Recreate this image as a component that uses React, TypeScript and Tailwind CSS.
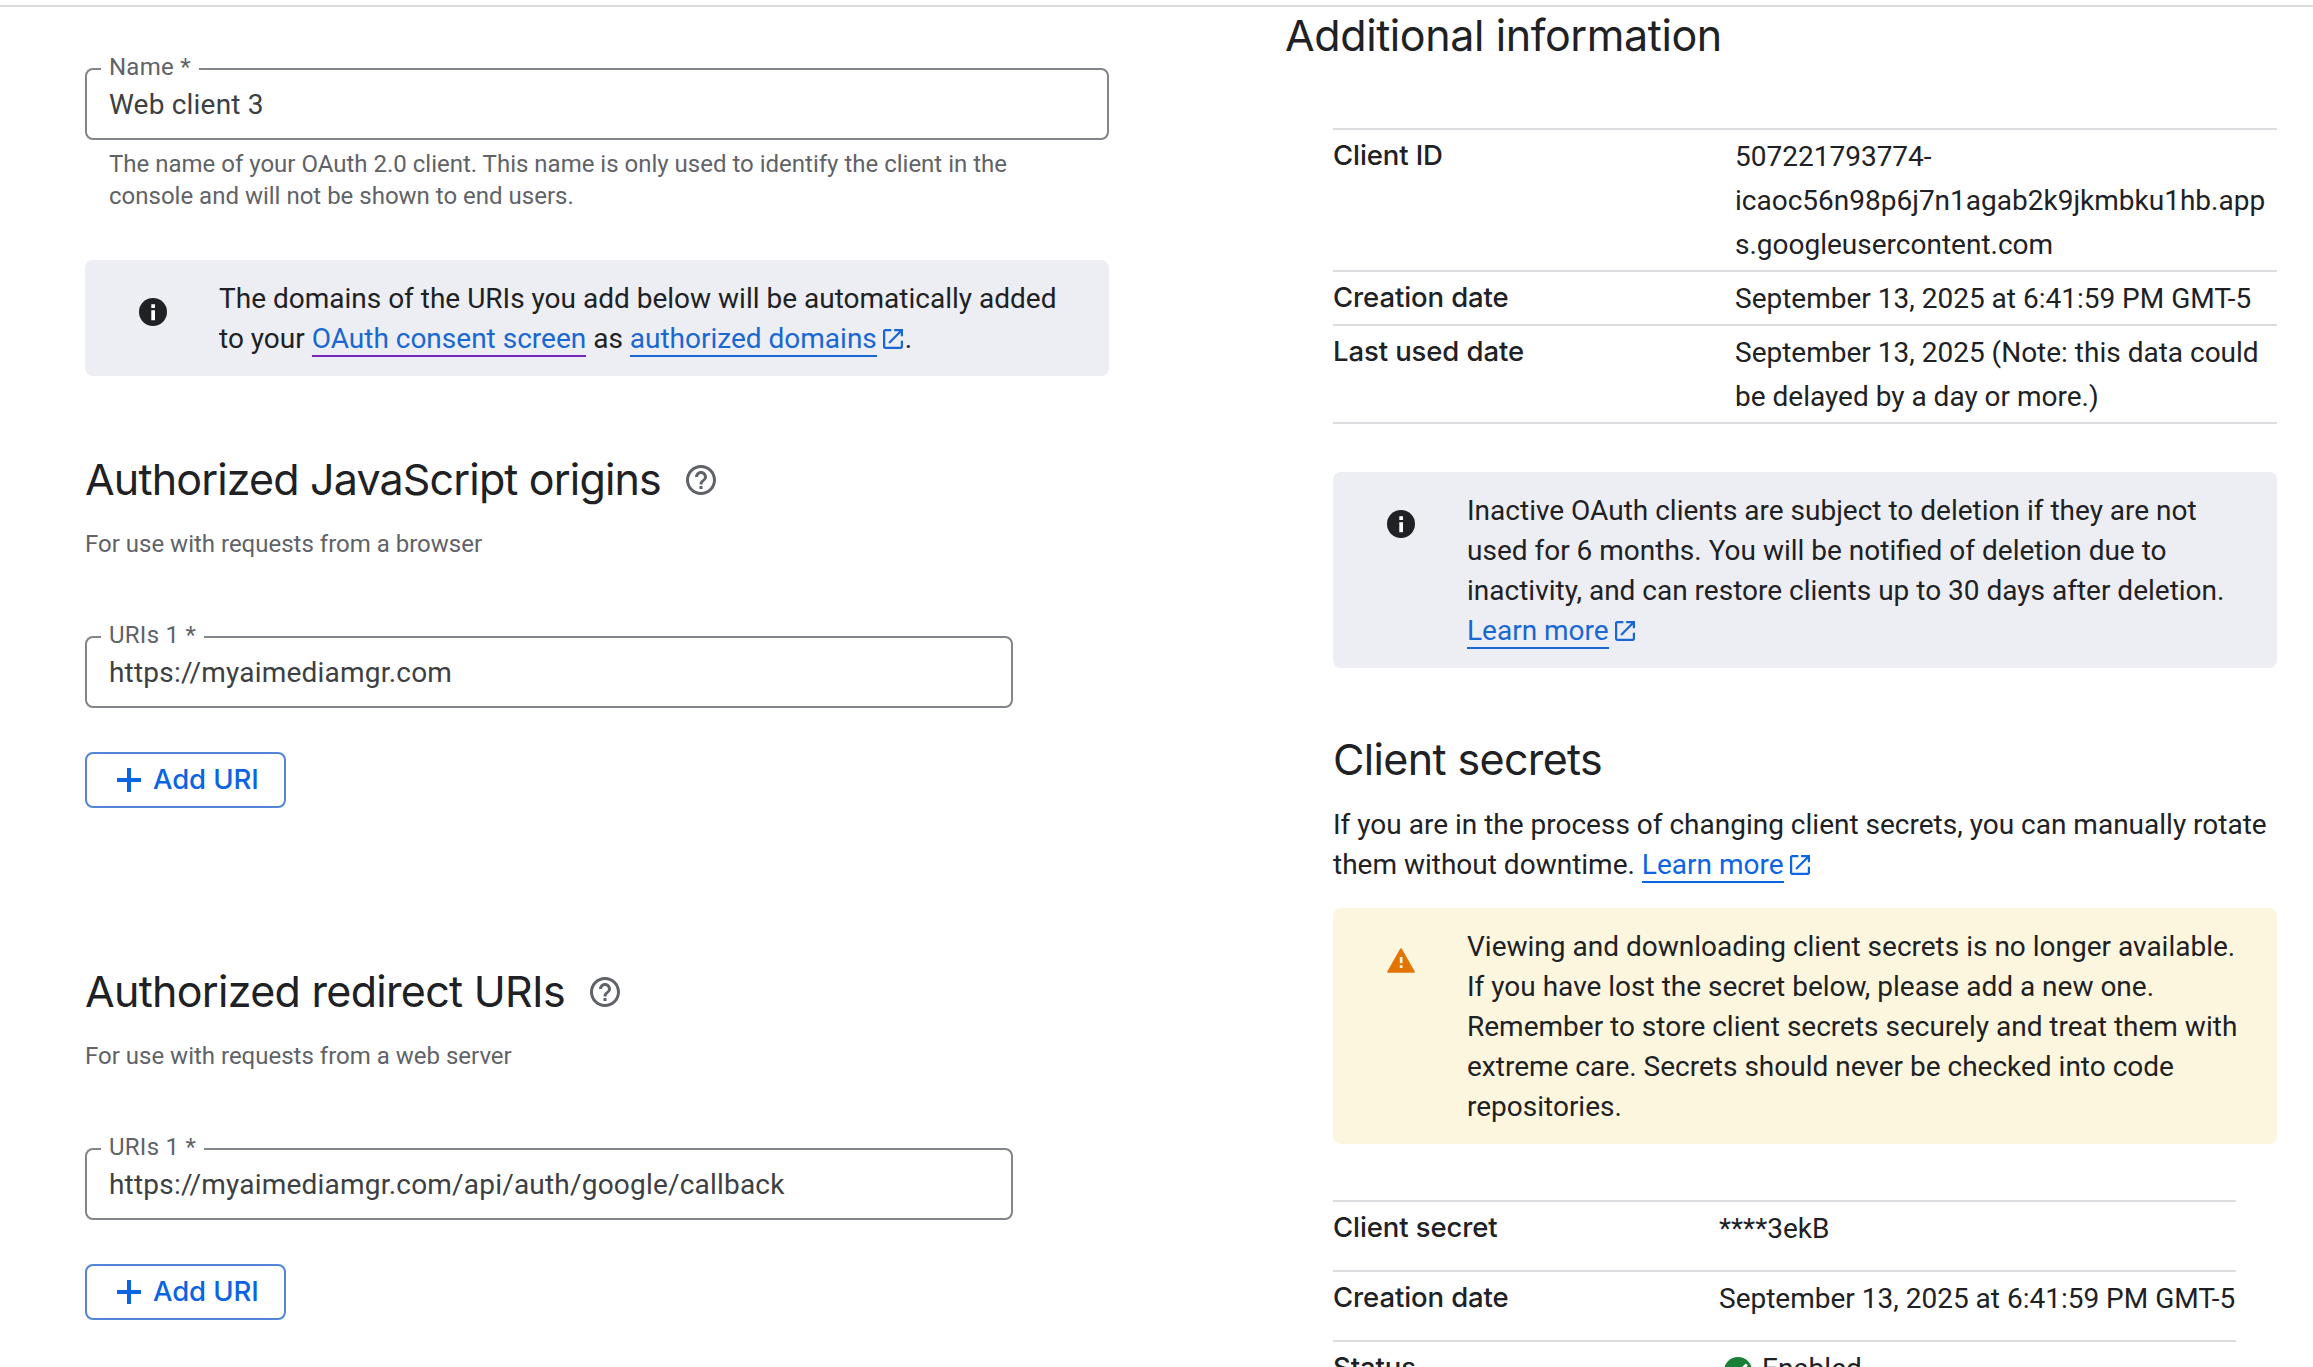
import React from "react";

const BODY = "font-['Roboto',sans-serif]";
const HEAD = "font-['Inter',sans-serif]";

function ExternalIcon() {
  return (
    <svg viewBox="3 3 18 18" className="mr-[2px] ml-[6px] inline-block h-[20px] w-[20px] align-[-1px]" fill="currentColor">
      <path d="M19 19H5V5h5.500V3H5c-1.110 0-2 .9-2 2v14c0 1.100.890 2 2 2h14c1.100 0 2-.9 2-2v-5.500h-2V19zM13 3v2h4.590l-9.830 9.830 1.410 1.410L19 6.410V9.500h2V3h-8z" />
    </svg>
  );
}

function HelpIcon() {
  return (
    <svg viewBox="2 2 20 20" className="h-[30px] w-[30px] shrink-0 text-[#5f6368]" fill="currentColor">
      <path d="M11 18h2v-2h-2v2zm1-16C6.480 2 2 6.480 2 12s4.480 10 10 10 10-4.480 10-10S17.520 2 12 2zm0 18c-4.410 0-8-3.590-8-8s3.590-8 8-8 8 3.590 8 8-3.590 8-8 8zm0-14c-2.210 0-4 1.790-4 4h2c0-1.100.900-2 2-2s2 .900 2 2c0 2-3 1.750-3 5h2c0-2.250 3-2.500 3-5 0-2.210-1.790-4-4-4z" />
    </svg>
  );
}

function Link({ children, visited = false, external = false, bright = false }: { children: React.ReactNode; visited?: boolean; external?: boolean; bright?: boolean }) {
  return (
    <a className={bright ? "text-[#0b65e3]" : "text-[#1967d2]"}>
      <span className={visited ? "border-b-2 border-[#7627bb]" : "border-b-2 border-current"}>{children}</span>
      {external && <ExternalIcon />}
    </a>
  );
}

function Notice({ kind, children }: { kind: "info" | "warning"; children: React.ReactNode }) {
  return (
    <div className={kind === "info" ? "flex rounded-[8px] bg-[#edeef3] pt-[19px] pb-[17px] text-[#202124]" : "flex rounded-[8px] bg-[#fdf6df] pt-[19px] pb-[17px] text-[#202124]"}>
      <div className="flex w-[134px] shrink-0 pl-[54px] pt-[19px]">
        {kind === "info" ? (
          <svg viewBox="0 0 28 28" className="h-[28px] w-[28px]">
            <circle cx="14" cy="14" r="14" fill="#202124" />
            <path d="M12.300 6.300h3.700v3.600h-3.700zM12.300 12.200h3.700v10h-3.700z" fill="#fff" />
          </svg>
        ) : (
          <svg viewBox="0 0 28 28" className="h-[28px] w-[28px]">
            <path d="M14 3 27 26H1z" fill="#e37400" stroke="#e37400" strokeWidth="1.600" strokeLinejoin="round" />
            <path d="M12.800 11h2.700v6.300h-2.700zM12.800 19.300h2.700v2.700h-2.700z" fill="#fdf6df" />
          </svg>
        )}
      </div>
      <div className="text-[28px] leading-[40px] whitespace-nowrap">{children}</div>
    </div>
  );
}

function Field({ label, value, wide = false }: { label: string; value: string; wide?: boolean }) {
  return (
    <div className={wide ? "relative h-[72px] w-[1024px] rounded-[8px] border-2 border-[#80868b]" : "relative h-[72px] w-[928px] rounded-[8px] border-2 border-[#80868b]"}>
      <span className="absolute top-[-19px] left-[14px] bg-white px-[8px] text-[24px] leading-[32px] tracking-[0.25px] text-[#5f6368]">{label}</span>
      <div className="pt-[15px] pl-[22px] text-[28px] leading-[40px] tracking-[0.2px] text-[#3c4043]">{value}</div>
    </div>
  );
}

function UriSection({ title, hint, value, titleClass }: { title: string; hint: string; value: string; titleClass: string }) {
  return (
    <section className="h-[512px]">
      <div className="flex h-[56px] items-center">
        <h2 className={titleClass}>{title}</h2>
        <HelpIcon />
      </div>
      <p className="mt-[20px] text-[24px] leading-[32px] text-[#5f6368]">{hint}</p>
      <div className="mt-[76px]">
        <Field label="URIs 1 *" value={value} />
      </div>
      <button className="mt-[44px] flex h-[56px] w-[201px] items-center rounded-[8px] border-2 border-[#5384d6] pl-[30px] text-[#0b65e3]">
        <svg viewBox="0 0 24 24" className="h-[24px] w-[24px]">
          <path d="M12 0v24M0 12h24" stroke="currentColor" strokeWidth="4" />
        </svg>
        <span className={`${HEAD} ml-[12px] text-[27.5px] font-medium tracking-[-0.1px]`}>Add URI</span>
      </button>
    </section>
  );
}

function Row({ label, children, tall = false }: { label: string; children: React.ReactNode; tall?: boolean }) {
  return (
    <div className={tall ? "flex h-[70px] border-b-2 border-[#dadce0] pt-[4px]" : "flex border-b-2 border-[#dadce0] pt-[4px] pb-[3px]"}>
      <div className={`${HEAD} shrink-0 text-[27.5px] leading-[43px] font-medium tracking-[-0.1px] ${tall ? "w-[386px]" : "w-[402px]"}`}>{label}</div>
      <div className="pt-px text-[28px] leading-[44px] whitespace-nowrap">{children}</div>
    </div>
  );
}

export default function App() {
  return (
    <div className={`${BODY} h-[1367px] w-[2313px] overflow-hidden bg-white pt-[5px] text-[#202124]`}>
      <div className="flex h-[1362px] border-t-2 border-[#dadce0]">
        <main className="w-[1285px] shrink-0 pt-[61px] pl-[85px]">
          <Field label="Name *" value="Web client 3" wide />
          <p className="mt-[8px] ml-[24px] text-[24px] leading-[32px] text-[#5f6368]">
            The name of your OAuth 2.0 client. This name is only used to identify the client in the
            <br />
            console and will not be shown to end users.
          </p>
          <div className="mt-[48px] w-[1024px]">
            <Notice kind="info">
              The domains of the URIs you add below will be automatically added
              <br />
              to your <Link visited>OAuth consent screen</Link> as <Link external>authorized domains</Link>.
            </Notice>
          </div>
          <div className="mt-[76px]">
            <UriSection
              title="Authorized JavaScript origins"
              hint="For use with requests from a browser"
              value="https://myaimediamgr.com"
              titleClass="w-[601px] font-['Inter',sans-serif] text-[43px] leading-[54px] pb-[2px] font-normal tracking-[-0.840px] whitespace-nowrap"
            />
            <UriSection
              title="Authorized redirect URIs"
              hint="For use with requests from a web server"
              value="https://myaimediamgr.com/api/auth/google/callback"
              titleClass="w-[505px] font-['Inter',sans-serif] text-[43px] leading-[54px] pb-[2px] font-normal tracking-[-0.700px] whitespace-nowrap"
            />
          </div>
        </main>
        <aside className="w-[992px] shrink-0">
          <h2 className={`${HEAD} h-[56px] text-[43px] leading-[56px] tracking-[-0.400px]`}>Additional information</h2>
          <div className="ml-[48px]">
            <div className="mt-[65px] border-t-2 border-[#dadce0]">
              <Row label="Client ID">
                507221793774-
                <br />
                icaoc56n98p6j7n1agab2k9jkmbku1hb.app
                <br />
                s.googleusercontent.com
              </Row>
              <Row label="Creation date">September 13, 2025 at 6:41:59 PM GMT-5</Row>
              <Row label="Last used date">
                September 13, 2025 (Note: this data could
                <br />
                be delayed by a day or more.)
              </Row>
            </div>
            <div className="mt-[48px]">
              <Notice kind="info">
                Inactive OAuth clients are subject to deletion if they are not
                <br />
                used for 6 months. You will be notified of deletion due to
                <br />
                inactivity, and can restore clients up to 30 days after deletion.
                <br />
                <Link external>Learn more</Link>
              </Notice>
            </div>
            <h2 className={`${HEAD} mt-[64px] h-[56px] text-[43px] leading-[54px] tracking-[-0.640px]`}>Client secrets</h2>
            <p className="mt-[17px] text-[28px] leading-[40px] whitespace-nowrap">
              If you are in the process of changing client secrets, you can manually rotate
              <br />
              them without downtime. <Link external bright>Learn more</Link>
            </p>
            <div className="mt-[23px]">
              <Notice kind="warning">
                Viewing and downloading client secrets is no longer available.
                <br />
                If you have lost the secret below, please add a new one.
                <br />
                Remember to store client secrets securely and treat them with
                <br />
                extreme care. Secrets should never be checked into code
                <br />
                repositories.
              </Notice>
            </div>
            <div className="mt-[56px] w-[903px] border-t-2 border-[#dadce0]">
              <Row label="Client secret" tall>****3ekB</Row>
              <Row label="Creation date" tall>September 13, 2025 at 6:41:59 PM GMT-5</Row>
              <Row label="Status" tall>
                <span className="flex pl-[5px]">
                  <svg viewBox="2 2 20 20" className="mt-[10px] mr-[10px] h-[28px] w-[28px]">
                    <circle cx="12" cy="12" r="10" fill="#188038" />
                    <path d="m10 17-5-5 1.410-1.410L10 14.170l7.590-7.590L19 8l-9 9z" fill="#fff" />
                  </svg>
                  Enabled
                </span>
              </Row>
            </div>
          </div>
        </aside>
      </div>
    </div>
  );
}
